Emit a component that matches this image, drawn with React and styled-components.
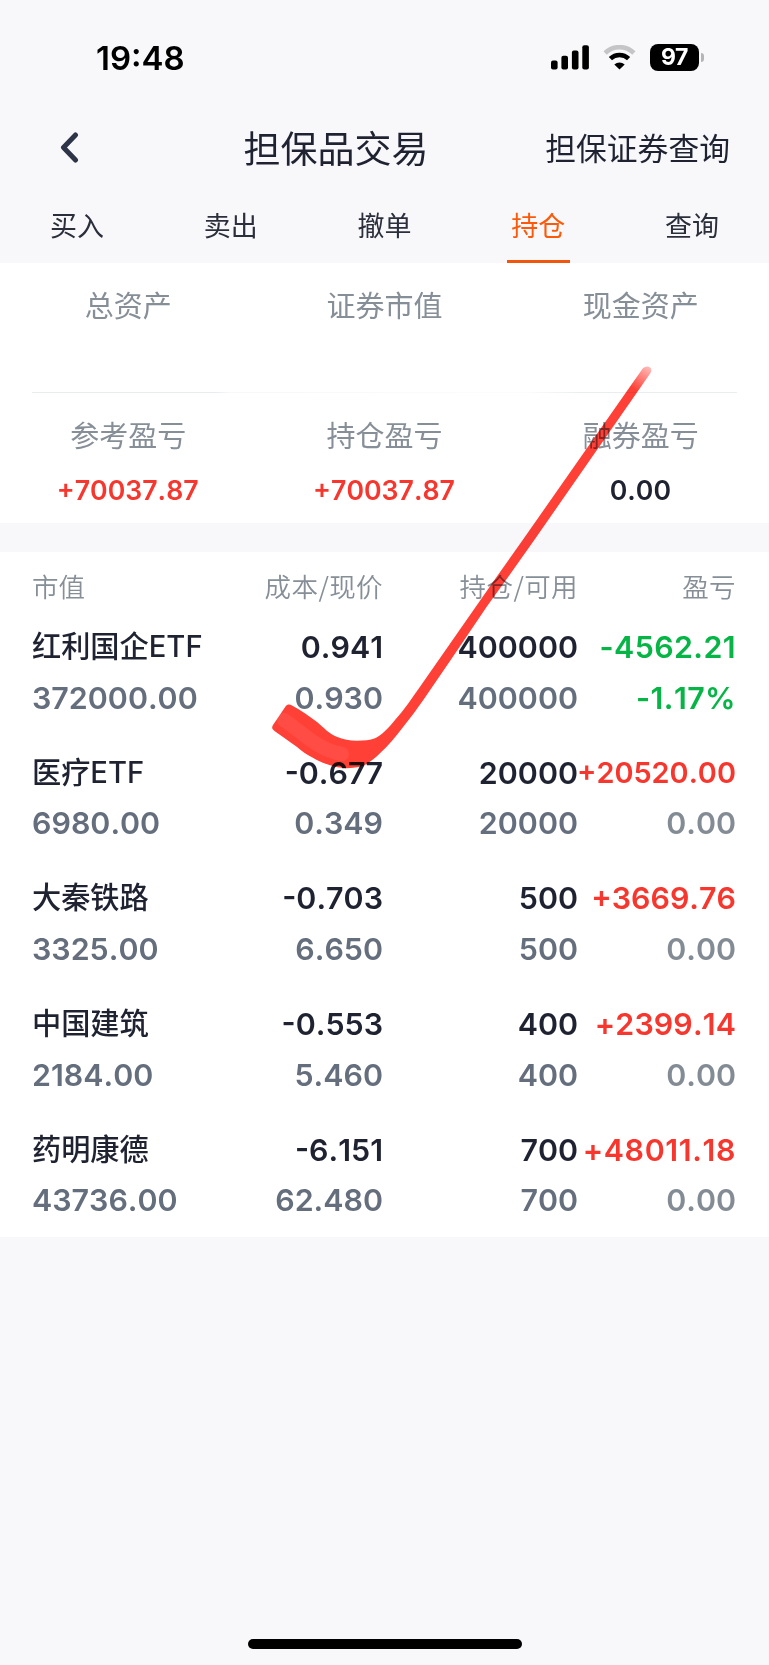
import styled, { createGlobalStyle } from "styled-components";

const tabs = ["买入", "卖出", "撤单", "持仓", "查询"];

const assets = ["总资产", "证券市值", "现金资产"];

const profits = [
  { label: "参考盈亏", value: "+70037.87", color: "#f7372e" },
  { label: "持仓盈亏", value: "+70037.87", color: "#f7372e" },
  { label: "融券盈亏", value: "0.00", color: "#1f2231" },
];

const stocks = [
  { name: "红利国企ETF", market: "372000.00", cost: "0.941", price: "0.930", hold: "400000", usable: "400000", profit: "-4562.21", rate: "-1.17%", down: true, spacing: 0.4 },
  { name: "医疗ETF", market: "6980.00", cost: "-0.677", price: "0.349", hold: "20000", usable: "20000", profit: "+20520.00", rate: "0.00", size: 28.9 },
  { name: "大秦铁路", market: "3325.00", cost: "-0.703", price: "6.650", hold: "500", usable: "500", profit: "+3669.76", rate: "0.00" },
  { name: "中国建筑", market: "2184.00", cost: "-0.553", price: "5.460", hold: "400", usable: "400", profit: "+2399.14", rate: "0.00", spacing: 0.1 },
  { name: "药明康德", market: "43736.00", cost: "-6.151", price: "62.480", hold: "700", usable: "700", profit: "+48011.18", rate: "0.00", spacing: 0.6 },
];

function StatusBar() {
  return (
    <StStatus>
      <StTime>19:48</StTime>
      <StStatusIcons>
        <svg width="38" height="25" viewBox="0 0 38 25">
          <rect x="0" y="15.4" width="6.6" height="9" rx="2" />
          <rect x="10.4" y="10.8" width="6.6" height="13.6" rx="2" />
          <rect x="20.9" y="5.6" width="6.6" height="18.8" rx="2" />
          <rect x="31.3" y="0.2" width="6.6" height="24.2" rx="2" />
        </svg>
        <svg width="33" height="25" viewBox="0 0 33 25">
          <path
            d="M2.1 8A20.5 20.5 0 0 1 30.9 8"
            fill="none"
            stroke="#c5c5c8"
            strokeWidth="4.6"
          />
          <path
            d="M7.4 13.6A13.3 13.3 0 0 1 25.6 13.6"
            fill="none"
            stroke="#000"
            strokeWidth="4.6"
          />
          <path d="M16.5 24.4L11.3 19.4A8 8 0 0 1 21.7 19.4Z" />
        </svg>
        <StBattery>
          <StLevel>97</StLevel>
          <StNub />
        </StBattery>
      </StStatusIcons>
    </StStatus>
  );
}

function StockRow({ stock }) {
  const color = stock.down ? "#06b545" : "#f7372e";
  return (
    <StStock>
      <StLine>
        <StName>{stock.name}</StName>
        <StNum>{stock.cost}</StNum>
        <StNum>{stock.hold}</StNum>
        <StNum $color={color} $size={stock.size} $spacing={stock.spacing}>
          {stock.profit}
        </StNum>
      </StLine>
      <StLine>
        <StNum $left $color="#646e7d">
          {stock.market}
        </StNum>
        <StNum $color="#646e7d">{stock.price}</StNum>
        <StNum $color="#646e7d">{stock.usable}</StNum>
        <StNum $color={stock.down ? color : "#838c94"} $spacing={stock.down && 0.4}>
          {stock.rate}
        </StNum>
      </StLine>
    </StStock>
  );
}

// hand drawn check mark lying over the list
function CheckMark() {
  return (
    <StMark width="769" height="820" viewBox="0 0 769 820">
      <defs>
        <linearGradient
          id="tip"
          gradientUnits="userSpaceOnUse"
          x1="649"
          y1="366"
          x2="634"
          y2="389"
        >
          <stop offset="0" stopColor="#ff453b" stopOpacity="0.35" />
          <stop offset="1" stopColor="#ff4037" />
        </linearGradient>
      </defs>
      <path
        fill="url(#tip)"
        d="M292 705.5C301 710 309 716 316.7 721.7C324 727.5 329 734 336.7 736.7C343 739.5 350 740.7 356.7 740.7C364 740.7 370 740.500 375 738.3C378 737 382 734 385 731C389 727 392 724 395 720C404 710 412 698 420 686.7L457.3 633.3L496.7 576.7L522.7 540L642 369.5C646 364 654 367 650.5 373L534.3 540L508.3 576.700L486.7 606.7L450.7 660L423.300 700C417 709 410 718.5 403.3 726.7C396 736 389 745 380 753.3C373 760 366 765.500 359 767C351 768.500 343 768.500 336.7 767C328 765 320 762 313.3 758C307 755 302 751 296.7 746.7L274.500 731C272 729 271.500 727.500 273 725L285.500 706.500C287.500 704 289.500 704 292 705.5Z"
      />
      <path
        d="M284 720C303 733 318 750 342 754"
        fill="none"
        stroke="#fff"
        strokeWidth="14"
        strokeOpacity="0.07"
        strokeLinecap="round"
      />
    </StMark>
  );
}

function App() {
  return (
    <StPage>
      <GlobalStyle />
      <StatusBar />
      <StHeader>
        <StBack>
          <svg width="20" height="32" viewBox="0 0 20 32">
            <path
              d="M16.5 3L4.500 15.5L16.5 28"
              fill="none"
              stroke="#2e3447"
              strokeWidth="5"
              strokeLinecap="round"
              strokeLinejoin="round"
            />
          </svg>
        </StBack>
        <StTitle>担保品交易</StTitle>
        <StQuery>担保证券查询</StQuery>
      </StHeader>
      <StTabs>
        {tabs.map((tab) => (
          <StTab key={tab} $active={tab === "持仓"}>
            {tab}
          </StTab>
        ))}
      </StTabs>
      <StSummary>
        <StAssets>
          {assets.map((label) => (
            <StLabel key={label}>{label}</StLabel>
          ))}
        </StAssets>
        <StDivider />
        <StProfits>
          {profits.map((item) => (
            <StProfit key={item.label}>
              <StLabel>{item.label}</StLabel>
              <StValue $color={item.color}>{item.value}</StValue>
            </StProfit>
          ))}
        </StProfits>
      </StSummary>
      <StList>
        <StListHead>
          <StHeadCell $left>市值</StHeadCell>
          <StHeadCell>成本/现价</StHeadCell>
          <StHeadCell>持仓/可用</StHeadCell>
          <StHeadCell>盈亏</StHeadCell>
        </StListHead>
        {stocks.map((stock) => (
          <StockRow key={stock.name} stock={stock} />
        ))}
      </StList>
      <StHomeBar />
      <CheckMark />
    </StPage>
  );
}

const GlobalStyle = createGlobalStyle`
  * {
    box-sizing: border-box;
  }

  body {
    margin: 0;
    background: #f8f8fb;
    font-family: Inter, "Noto Sans CJK SC", sans-serif;
  }
`;

const StPage = styled.div`
  position: relative;
  display: flex;
  flex-direction: column;
  width: 769px;
  height: 1665px;
  background: #f8f8fb;
  color: #1f2231;
  overflow: hidden;
`;

const StStatus = styled.div`
  display: flex;
  justify-content: space-between;
  align-items: center;
  height: 115px;
  padding: 0 65px 0 96px;
  color: #000;
`;

const StTime = styled.span`
  font-size: 33px;
  font-weight: 600;
  line-height: 40px;
`;

const StStatusIcons = styled.div`
  display: flex;
  align-items: center;
  gap: 14px;
`;

const StBattery = styled.div`
  display: flex;
  align-items: center;
  gap: 2px;
`;

const StLevel = styled.div`
  width: 49px;
  height: 27px;
  border-radius: 8px;
  background: #000;
  color: #fff;
  font-size: 23px;
  font-weight: 700;
  letter-spacing: -0.5px;
  line-height: 27px;
  text-align: center;
`;

const StNub = styled.div`
  width: 3px;
  height: 9px;
  border-radius: 0 4px 4px 0;
  background: #b5b5b8;
`;

const StHeader = styled.div`
  display: grid;
  grid-template-columns: 186px 300px 1fr;
  align-items: center;
  height: 66px;
  padding-right: 39px;
`;

const StBack = styled.div`
  display: flex;
  padding-left: 59px;
`;

const StTitle = styled.h1`
  margin: 0;
  padding-top: 3px;
  font-size: 37px;
  font-weight: 400;
  line-height: 50px;
  text-align: center;
`;

const StQuery = styled.div`
  padding-top: 1px;
  font-size: 30.8px;
  line-height: 44px;
  text-align: right;
`;

const StTabs = styled.div`
  display: grid;
  grid-template-columns: repeat(5, 1fr);
  height: 82px;
`;

const StTab = styled.div`
  justify-self: center;
  width: 63px;
  height: 82px;
  padding-top: 2px;
  border-bottom: 3px solid ${({ $active }) => ($active ? "#f2560d" : "transparent")};
  color: ${({ $active }) => ($active ? "#fa5a0a" : "#2b2e3b")};
  font-size: 27px;
  line-height: 87px;
  text-align: center;
  white-space: nowrap;
`;

const StSummary = styled.div`
  height: 260px;
  background: #fff;
`;

const StAssets = styled.div`
  display: grid;
  grid-template-columns: repeat(3, 1fr);
  height: 129px;
  padding-top: 23px;
`;

const StLabel = styled.div`
  color: #868f97;
  font-size: 29px;
  font-weight: 400;
  line-height: 42px;
  text-align: center;
`;

const StDivider = styled.div`
  height: 1px;
  margin: 0 32px;
  background: linear-gradient(
    to right,
    #e9ebec 26%,
    #f8f8f9 28%,
    #fcfcfc 70%,
    #eaecee 78%
  );
`;

const StProfits = styled.div`
  display: grid;
  grid-template-columns: repeat(3, 1fr);
  padding-top: 23px;
`;

const StProfit = styled.div`
  display: flex;
  flex-direction: column;
  gap: 12px;
`;

const StValue = styled.div`
  padding-right: 1px;
  color: ${({ $color }) => $color};
  font-size: 26.7px;
  font-weight: 600;
  font-kerning: none;
  line-height: 40px;
  text-align: center;
`;

const StList = styled.div`
  height: 685px;
  margin-top: 29px;
  padding: 14px 33px 0 32px;
  background: #fff;
`;

const StListHead = styled.div`
  display: grid;
  grid-template-columns: 180px 171px 195px 158px;
  height: 56px;
`;

const StHeadCell = styled.div`
  color: #868f97;
  font-family: "Noto Sans CJK SC", sans-serif;
  font-size: 26.5px;
  font-weight: 350;
  letter-spacing: ${({ $left }) => ($left ? "0" : "0.4px")};
  line-height: 40px;
  text-align: ${({ $left }) => ($left ? "left" : "right")};
`;

const StStock = styled.div`
  height: 125.7px;
`;

const StLine = styled.div`
  display: grid;
  grid-template-columns: 180px 171px 195px 158px;
  height: 50.5px;
  line-height: 50px;
`;

const StName = styled.div`
  font-size: 29.2px;
  font-weight: 500;
  white-space: nowrap;
`;

const StNum = styled.div`
  display: flex;
  justify-content: ${({ $left }) => ($left ? "flex-start" : "flex-end")};
  color: ${({ $color }) => $color || "#1f2231"};
  font-size: ${({ $size }) => $size || 30.4}px;
  font-weight: 570;
  font-kerning: none;
  letter-spacing: ${({ $spacing }) => $spacing || 0}px;
  white-space: nowrap;
`;

const StHomeBar = styled.div`
  width: 274px;
  height: 10px;
  margin: auto auto 16px;
  border-radius: 5px;
  background: #000;
`;

const StMark = styled.svg`
  position: absolute;
  top: 0;
  left: 0;
  mix-blend-mode: multiply;
  pointer-events: none;
`;

export default App;
